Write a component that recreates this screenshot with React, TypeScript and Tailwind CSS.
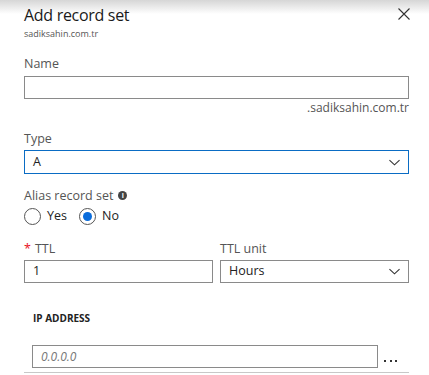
export default function App() {
  return (
    <main
      className="relative w-[429px] h-[375px] overflow-hidden bg-white text-[#323130]"
      style={{ fontFamily: '"Open Sans", "Noto Sans", sans-serif' }}
    >
      <div className="absolute inset-x-0 top-0 h-[14px] bg-gradient-to-b from-[#d6d6d6] to-white" />
      <button className="absolute right-[19px] top-[8px] w-[12px] h-[12px] text-[#333]">
        <svg viewBox="0 0 12 12" className="w-full h-full" fill="none" stroke="currentColor" strokeWidth="1.1">
          <path d="M0.5 0.5 L11.5 11.5 M11.5 0.5 L0.5 11.5" />
        </svg>
      </button>

      <section className="relative flex flex-col pl-[24px] pr-[20px]">
        <h1 className="mt-[4px] text-[16px] leading-[22px] tracking-[-0.3px] text-[#1a1a1a]">Add record set</h1>
        <p className="mt-[2px] text-[9px] leading-[12px] text-[#555]">sadiksahin.com.tr</p>

        <label className="mt-[15px] text-[12.5px] leading-[17px] text-[#555]">Name</label>
        <div className="mt-[4px] h-[23px] border border-[#8a8a8a]" />
        <p className="self-end text-[12px] leading-[17px] text-[#555]">.sadiksahin.com.tr</p>

        <label className="mt-[14px] text-[12.5px] leading-[17px] text-[#555]">Type</label>
        <div className="mt-[3px] h-[24px] border border-[#0a6cc4] flex items-center justify-between pl-[8px] pr-[8px]">
          <span className="text-[12.5px] text-[#222]">A</span>
          <Chevron />
        </div>

        <div className="mt-[13px] flex items-center gap-[5px]">
          <span className="text-[12.5px] leading-[17px] text-[#555]">Alias record set</span>
          <span className="w-[9px] h-[9px] rounded-full bg-[#444] text-white text-[7px] font-bold leading-[9px] text-center">i</span>
        </div>
        <div className="mt-[4px] h-[17px] flex items-center gap-[6px] text-[12.5px] text-[#222]">
          <span className="w-[17px] h-[17px] rounded-full border border-[#555] bg-white" />
          <span className="mr-[6px]">Yes</span>
          <span className="w-[17px] h-[17px] rounded-full border border-[#555] flex items-center justify-center">
            <span className="w-[9px] h-[9px] rounded-full bg-[#0a6cdb]" />
          </span>
          <span>No</span>
        </div>

        <div className="mt-[15px] grid grid-cols-2 gap-x-[7px]">
          <div className="flex flex-col">
            <label className="text-[12.5px] leading-[17px] text-[#555]">
              <span className="text-[#e81123] mr-[4px]">*</span>TTL
            </label>
            <div className="mt-[3px] h-[23px] border border-[#8a8a8a] flex items-center pl-[8px] text-[12.5px] text-[#222]">1</div>
          </div>
          <div className="flex flex-col">
            <label className="text-[12.5px] leading-[17px] text-[#555]">TTL unit</label>
            <div className="mt-[3px] h-[23px] border border-[#8a8a8a] flex items-center justify-between pl-[8px] pr-[8px] text-[12.5px] text-[#222]">
              <span>Hours</span>
              <Chevron />
            </div>
          </div>
        </div>

        <h2 className="mt-[29px] ml-[9px] text-[10px] leading-[12px] font-bold text-[#222]">IP ADDRESS</h2>
        <div className="mt-[21px] ml-[8px] flex items-end">
          <div className="flex-1 h-[23px] border border-[#8a8a8a] flex items-center pl-[8px] text-[12px] italic text-[#777]">0.0.0.0</div>
          <span className="ml-[6px] mr-[12px] mb-[6px] w-[13px] flex justify-between">
            <i className="w-[2px] h-[2px] bg-[#333]" />
            <i className="w-[2px] h-[2px] bg-[#333]" />
            <i className="w-[2px] h-[2px] bg-[#333]" />
          </span>
        </div>
        <div className="mt-[4px] h-px bg-[#c8c8c8]" />
      </section>
    </main>
  );
}

function Chevron() {
  return (
    <svg viewBox="0 0 12 7" className="w-[11px] h-[7px] text-[#333]" fill="none" stroke="currentColor" strokeWidth="1.2">
      <path d="M0.5 0.8 L6 6 L11.5 0.8" />
    </svg>
  );
}
